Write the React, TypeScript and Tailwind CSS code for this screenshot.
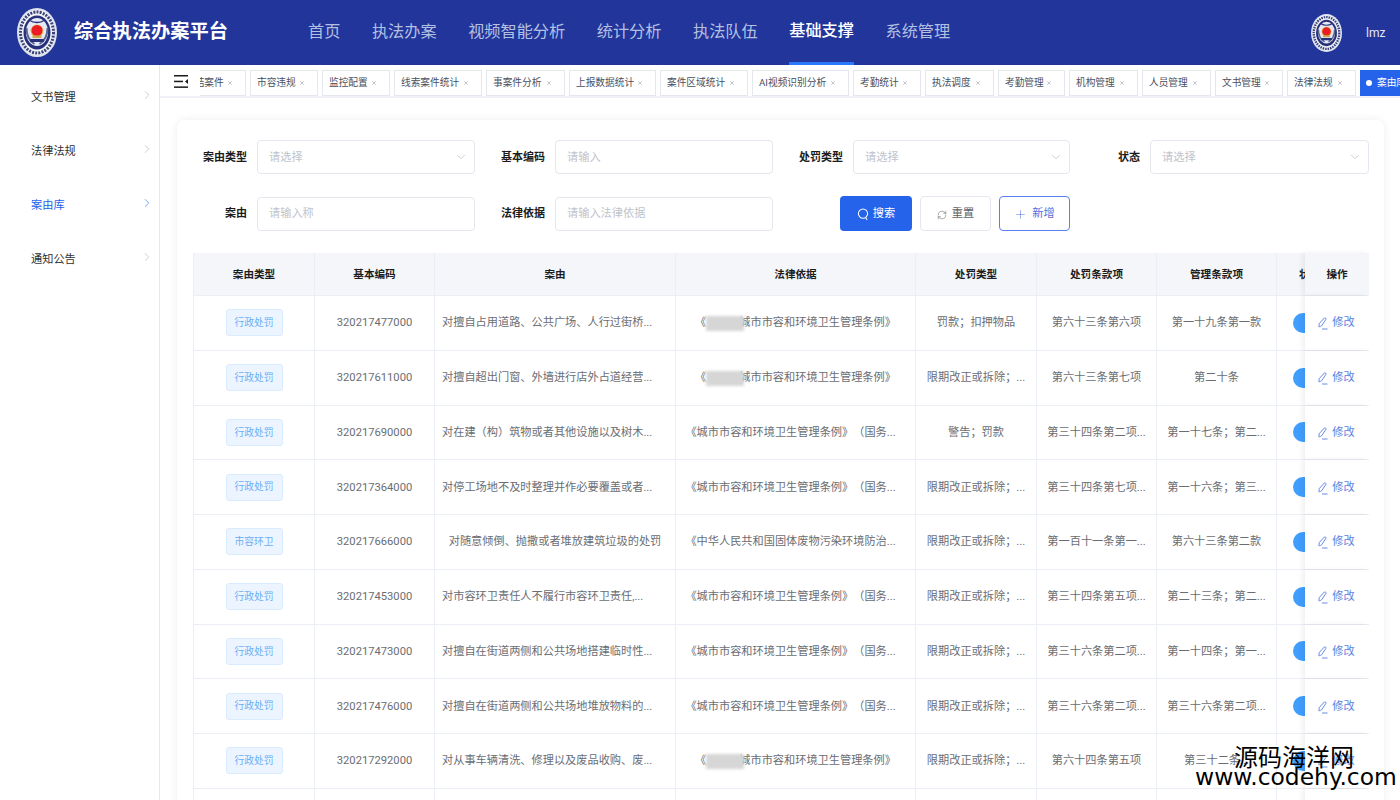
import { ChevronDown, ChevronRight, Plus, RefreshCw, X } from "lucide-react";

const font = "font-['Roboto','Noto_Sans_CJK_SC',sans-serif]";

const navItems = ["首页", "执法办案", "视频智能分析", "统计分析", "执法队伍", "基础支撑", "系统管理"];
const sideItems = ["文书管理", "法律法规", "案由库", "通知公告"];
const tabs = [
  { label: "已结案件", w: "w-[68px]" },
  { label: "市容违规", w: "w-[68px]" },
  { label: "监控配置", w: "w-[68px]" },
  { label: "线索案件统计", w: "w-[88px]" },
  { label: "事案件分析", w: "w-[79px]" },
  { label: "上报数据统计", w: "w-[87px]" },
  { label: "案件区域统计", w: "w-[88px]" },
  { label: "AI视频识别分析", w: "w-[97px]" },
  { label: "考勤统计", w: "w-[68px]" },
  { label: "执法调度", w: "w-[69px]" },
  { label: "考勤管理", w: "w-[67px]" },
  { label: "机构管理", w: "w-[69px]" },
  { label: "人员管理", w: "w-[69px]" },
  { label: "文书管理", w: "w-[68px]" },
  { label: "法律法规", w: "w-[69px]" },
];

const colClass = "grid grid-cols-[121px_120px_241px_240px_121px_120px_120px_28px_64px]";
const law1 = "《城市市容和环境卫生管理条例》（国务...";
const fine = "限期改正或拆除；...";

const rows = [
  { type: "行政处罚", code: "320217477000", name: "对擅自占用道路、公共广场、人行过街桥...", law: "", kind: "罚款；扣押物品", a: "第六十三条第六项", b: "第一十九条第一款" },
  { type: "行政处罚", code: "320217611000", name: "对擅自超出门窗、外墙进行店外占道经营...", law: "", kind: fine, a: "第六十三条第七项", b: "第二十条" },
  { type: "行政处罚", code: "320217690000", name: "对在建（构）筑物或者其他设施以及树木...", law: law1, kind: "警告；罚款", a: "第三十四条第二项...", b: "第一十七条；第二..." },
  { type: "行政处罚", code: "320217364000", name: "对停工场地不及时整理并作必要覆盖或者...", law: law1, kind: fine, a: "第三十四条第七项...", b: "第一十六条；第三..." },
  { type: "市容环卫", code: "320217666000", name: "对随意倾倒、抛撒或者堆放建筑垃圾的处罚", center: true, law: "《中华人民共和国固体废物污染环境防治...", kind: fine, a: "第一百十一条第一...", b: "第六十三条第二款" },
  { type: "行政处罚", code: "320217453000", name: "对市容环卫责任人不履行市容环卫责任,...", law: law1, kind: fine, a: "第三十四条第五项...", b: "第二十三条；第二..." },
  { type: "行政处罚", code: "320217473000", name: "对擅自在街道两侧和公共场地搭建临时性...", law: law1, kind: fine, a: "第三十六条第二项...", b: "第一十四条；第一..." },
  { type: "行政处罚", code: "320217476000", name: "对擅自在街道两侧和公共场地堆放物料的...", law: law1, kind: fine, a: "第三十六条第二项...", b: "第三十六条第二项..." },
  { type: "行政处罚", code: "320217292000", name: "对从事车辆清洗、修理以及废品收购、废...", law: "", kind: fine, a: "第六十四条第五项", b: "第三十二条..." },
];

function Emblem({ className }: { className: string }) {
  return (
    <svg viewBox="0 0 40 49" className={className}>
      <ellipse cx="20" cy="24.5" rx="20" ry="24.5" fill="#dfe3ee" />
      <ellipse cx="20" cy="24.5" rx="18" ry="22.5" fill="#f2f3f8" />
      <ellipse cx="20" cy="24.5" rx="16.5" ry="20.5" fill="none" stroke="#3a4478" strokeWidth="3" strokeDasharray="2 1.2" />
      <ellipse cx="20" cy="24.5" rx="13.5" ry="17" fill="#27317a" />
      <ellipse cx="20" cy="24" rx="11" ry="14" fill="#e6e9f3" />
      <path d="M9.5 20c0 8 3 13 8 16M30.5 20c0 8-3 13-8 16" fill="none" stroke="#5a6494" strokeWidth="2" />
      <path d="M13 12.5c2 1.5 4.500 2 7 2s5-.5 7-2" fill="none" stroke="#27317a" strokeWidth="1.500" />
      <circle cx="20" cy="23" r="6.500" fill="#e1c15a" />
      <circle cx="20" cy="22.500" r="5.500" fill="#ec1c24" />
      <rect x="15.500" y="27.500" width="9" height="2.500" fill="#c9a94a" />
      <rect x="13" y="31" width="14" height="3" rx="1" fill="#27317a" />
    </svg>
  );
}

function MenuFold() {
  return (
    <svg viewBox="0 0 14 13" className="w-[14px] h-[13px]" fill="#1a1a1a">
      <rect x="0" y="0" width="14" height="1.500" />
      <rect x="0" y="5.700" width="9" height="1.500" />
      <rect x="0" y="11.400" width="14" height="1.500" />
      <path d="M11 6.500l3-2.600v5.200z" />
    </svg>
  );
}

function SearchIcon() {
  return (
    <svg viewBox="0 0 13 14" className="w-[12px] h-[13px]" fill="none" stroke="currentColor" strokeWidth="1.100">
      <circle cx="6.500" cy="6" r="5" />
      <path d="M9.500 10.500l1.500 2.300" />
    </svg>
  );
}

function EditIcon() {
  return (
    <svg viewBox="0 0 12 14" className="w-[11px] h-[13px]" fill="none" stroke="currentColor" strokeWidth="1">
      <path d="M2 10.500l.5-3.500 5.500-6c.8-.7 2.200.4 1.700 1.500l-4.700 7c-.8.700-1.800 1.100-2.500 1z" />
      <path d="M5.500 13h6" />
    </svg>
  );
}

function Field({ label, placeholder, select }: { label: string; placeholder: string; select?: boolean }) {
  return (
    <div className="flex items-center">
      <div className="w-[54px] mr-[10px] pt-[2px] text-right text-[11px] font-bold text-[#1c1c1c] whitespace-nowrap">{label}</div>
      <div className="flex-1 h-[34px] pl-[11px] pr-[11px] flex items-center justify-between border border-[#e4e7ed] rounded-[4px] bg-white text-[11.2px] text-[#c0c4cc]">
        <span className="pt-[2px]">{placeholder}</span>
        {select && <ChevronDown size={14} strokeWidth={1} className="-mr-[5px] text-[#a8abb2]" />}
      </div>
    </div>
  );
}

function Redacted() {
  return <span className="inline-block align-middle w-[38px] h-[15px] -mr-[5px] relative bg-[#d6d6d6] blur-[1.5px]" />;
}

export default function App() {
  return (
    <div className={`${font} h-screen w-full overflow-hidden flex flex-col bg-white relative [text-spacing-trim:space-all]`}>
      {/* header */}
      <header className="h-[65px] shrink-0 bg-[#21359b] flex items-center">
        <Emblem className="w-10 h-[49px] ml-[17px]" />
        <div className="ml-[17px] w-[234px] text-[19.25px] font-bold text-white whitespace-nowrap">综合执法办案平台</div>
        <nav className="flex h-full gap-[31.5px]">
          {navItems.map((item) => (
            <div
              key={item}
              className={
                item === "基础支撑"
                  ? "h-full flex items-center text-[16.2px] font-medium text-white border-b-[3px] border-[#2979ff] whitespace-nowrap"
                  : "h-full flex items-center text-[16.2px] text-[#b4c0e2] whitespace-nowrap"
              }
            >
              {item}
            </div>
          ))}
        </nav>
        <div className="ml-auto flex items-center">
          <Emblem className="w-[31px] h-[38px]" />
          <span className="ml-6 mr-4 w-[18px] text-[12px] text-[#e6e9f5]">lmz</span>
        </div>
      </header>

      <div className="flex flex-1 min-h-0">
        {/* sidebar */}
        <aside className="w-[160px] shrink-0 border-r border-[#e6e8ef] pt-[4px]">
          {sideItems.map((item) => (
            <div
              key={item}
              className={`h-[54px] pl-[31px] pr-[5px] flex items-center justify-between text-[11.2px] ${item === "案由库" ? "text-[#2563eb]" : "text-[#303133]"}`}
            >
              <span className="pt-[4px]">{item}</span>
              <ChevronRight size={14} strokeWidth={1} className={`-mt-[2px] ${item === "案由库" ? "text-[#2563eb]" : "text-[#a8abb2]"}`} />
            </div>
          ))}
        </aside>

        <main className="flex-1 min-w-0 flex flex-col">
          {/* tabs */}
          <div className="h-[33px] shrink-0 flex border-b-2 border-[#f0f1f6]">
            <div className="w-[40px] shrink-0 pl-[14px] pt-[2px] flex items-center bg-white">
              <MenuFold />
            </div>
            <div className="flex-1 min-w-0 overflow-hidden pt-[5px]">
              <div className="flex gap-[4px] -ml-[22px] w-max h-[26px]">
                {tabs.map((t) => (
                  <div
                    key={t.label}
                    className={`${t.w} flex items-center justify-between pl-[6px] pr-[12px] border border-[#e4e7ed] bg-white text-[9.7px] text-[#495060] whitespace-nowrap`}
                  >
                    <span className="pt-[1px]">{t.label}</span>
                    <X size={6} strokeWidth={2} className="text-[#8a8f99]" />
                  </div>
                ))}
                <div className="w-[60px] flex items-center pl-[6px] bg-[#2563eb] text-[9.7px] text-white whitespace-nowrap">
                  <span className="w-[6px] h-[6px] mr-[5px] rounded-full bg-white" />
                  案由库
                </div>
              </div>
            </div>
          </div>

          {/* content */}
          <div className="flex-1 min-h-0 pt-[22px] pl-[17px] pr-[16px] bg-white">
            <div className="h-[800px] rounded-t-[8px] bg-white shadow-[0_0_10px_rgba(0,0,0,0.07)] pt-[20px] pl-[16px] pr-[15px]">
              <div className="grid grid-cols-[282px_282px_281px_283px] gap-x-4 gap-y-[22px]">
                <Field label="案由类型" placeholder="请选择" select />
                <Field label="基本编码" placeholder="请输入" />
                <Field label="处罚类型" placeholder="请选择" select />
                <Field label="状态" placeholder="请选择" select />
                <Field label="案由" placeholder="请输入称" />
                <Field label="法律依据" placeholder="请输入法律依据" />
                <div className="flex justify-end gap-2 h-[35px]">
                  <button className="w-[72px] pt-[2px] flex items-center justify-center gap-[4px] rounded-[4px] bg-[#2563eb] text-white text-[11.2px]">
                    <SearchIcon />
                    搜索
                  </button>
                  <button className="w-[71px] pt-[2px] flex items-center justify-center gap-[5px] rounded-[4px] border border-[#e4e7ed] bg-white text-[#606266] text-[11.2px]">
                    <RefreshCw size={10} strokeWidth={1.3} />
                    重置
                  </button>
                  <button className="w-[71px] pt-[2px] flex items-center justify-center gap-[5px] rounded-[4px] border border-[#5b7ff0] bg-white text-[#4f6fe0] text-[11.2px]">
                    <Plus size={13} strokeWidth={1} />
                    新增
                  </button>
                </div>
              </div>

              {/* table */}
              <div className="mt-[22px] border-l border-[#ebeef5]">
                <div className={`${colClass} h-[42px] bg-[#f4f6fa] text-[10.6px] font-bold text-[#1c1c1c]`}>
                  {["案由类型", "基本编码", "案由", "法律依据", "处罚类型", "处罚条款项", "管理条款项"].map((h) => (
                    <div key={h} className="flex items-center justify-center pt-[2px] border-r border-[#ebeef5]">
                      {h}
                    </div>
                  ))}
                  <div className="flex items-center pt-[2px] pl-[22px] overflow-hidden whitespace-nowrap">状态</div>
                  <div className="flex items-center justify-center pt-[2px] bg-[#f4f6fa] shadow-[-3px_0_5px_rgba(0,0,0,0.06)]">操作</div>
                </div>
                {rows.map((r) => (
                  <div key={r.code} className={`${colClass} h-[54.75px] border-t border-[#ebeef5] text-[11.2px] text-[#6a6d73] whitespace-nowrap`}>
                    <div className="flex items-center justify-center border-r border-[#ebeef5]">
                      <span className="w-[57px] h-[27px] pt-[1px] flex items-center justify-center rounded-[3px] border border-[#d9ecff] bg-[#ecf5ff] text-[9.8px] text-[#6aaef5]">{r.type}</span>
                    </div>
                    <div className="flex items-center justify-center pt-[2px] border-r border-[#ebeef5]">{r.code}</div>
                    <div className={`flex items-center pt-[2px] border-r border-[#ebeef5] px-[7px] ${r.center ? "justify-center" : ""}`}>{r.name}</div>
                    <div className={`flex items-center justify-center pt-[2px] border-r border-[#ebeef5] overflow-hidden ${r.law ? "pr-[10px]" : ""}`}>
                      {r.law ? (
                        r.law
                      ) : (
                        <span>
                          《<Redacted />城市市容和环境卫生管理条例》
                        </span>
                      )}
                    </div>
                    <div className="flex items-center justify-center pt-[2px] border-r border-[#ebeef5]">{r.kind}</div>
                    <div className="flex items-center justify-center pt-[2px] border-r border-[#ebeef5]">{r.a}</div>
                    <div className="flex items-center justify-center pt-[2px] border-r border-[#ebeef5]">{r.b}</div>
                    <div className="flex items-center pl-[16px] overflow-hidden">
                      <span className="shrink-0 w-[40px] h-[20px] rounded-full bg-[#409eff]" />
                    </div>
                    <div className="flex items-center justify-center pt-[2px] pr-[2px] gap-[4px] bg-white text-[#5b7fe0] shadow-[-3px_0_5px_rgba(0,0,0,0.06)]">
                      <EditIcon />
                      修改
                    </div>
                  </div>
                ))}
                <div className={`${colClass} h-[55px] border-t border-[#ebeef5]`}>
                  {[0, 1, 2, 3, 4, 5, 6].map((i) => (
                    <div key={i} className="border-r border-[#ebeef5]" />
                  ))}
                  <div />
                  <div className="bg-white shadow-[-3px_0_5px_rgba(0,0,0,0.06)]" />
                </div>
              </div>
            </div>
          </div>
        </main>
      </div>

      {/* watermark */}
      <div className="absolute left-[1195px] top-[744px] w-[205px] text-black leading-none pointer-events-none">
        <div className="ml-[39px] text-[24px] font-['Noto_Sans_CJK_SC',sans-serif] whitespace-nowrap">源码海洋网</div>
        <div className="-mt-[2px] text-[23.4px] font-['DejaVu_Sans',sans-serif] whitespace-nowrap">www.codehy.com</div>
      </div>
    </div>
  );
}
